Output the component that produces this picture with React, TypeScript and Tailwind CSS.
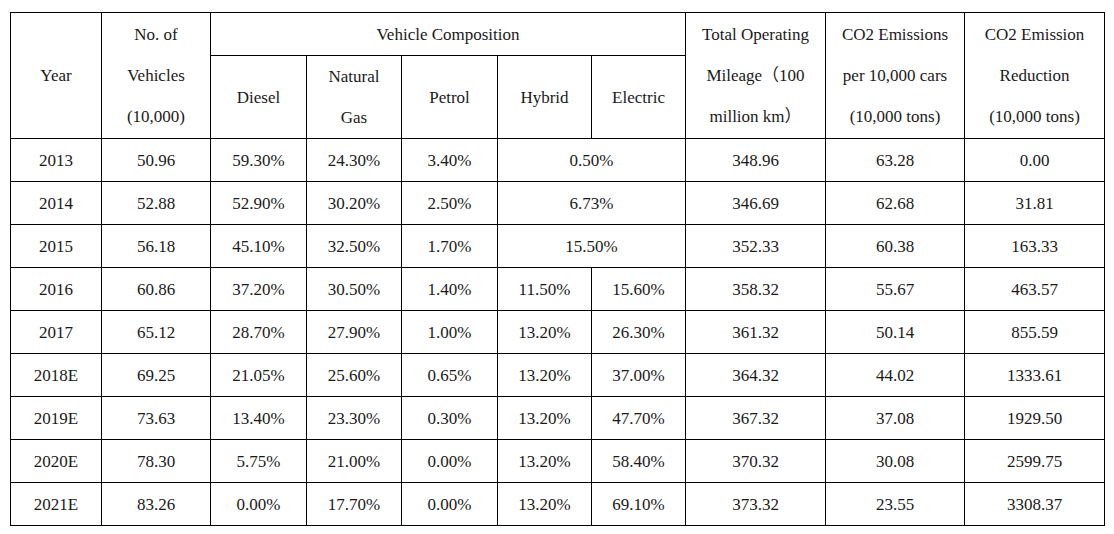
import React from 'react';

type Row = {
  year: string;
  vehicles: string;
  diesel: string;
  gas: string;
  petrol: string;
  hybrid?: string;
  electric?: string;
  combined?: string;
  mileage: string;
  perCar: string;
  reduction: string;
};

const rows: Row[] = [
  { year: '2013', vehicles: '50.96', diesel: '59.30%', gas: '24.30%', petrol: '3.40%', combined: '0.50%', mileage: '348.96', perCar: '63.28', reduction: '0.00' },
  { year: '2014', vehicles: '52.88', diesel: '52.90%', gas: '30.20%', petrol: '2.50%', combined: '6.73%', mileage: '346.69', perCar: '62.68', reduction: '31.81' },
  { year: '2015', vehicles: '56.18', diesel: '45.10%', gas: '32.50%', petrol: '1.70%', combined: '15.50%', mileage: '352.33', perCar: '60.38', reduction: '163.33' },
  { year: '2016', vehicles: '60.86', diesel: '37.20%', gas: '30.50%', petrol: '1.40%', hybrid: '11.50%', electric: '15.60%', mileage: '358.32', perCar: '55.67', reduction: '463.57' },
  { year: '2017', vehicles: '65.12', diesel: '28.70%', gas: '27.90%', petrol: '1.00%', hybrid: '13.20%', electric: '26.30%', mileage: '361.32', perCar: '50.14', reduction: '855.59' },
  { year: '2018E', vehicles: '69.25', diesel: '21.05%', gas: '25.60%', petrol: '0.65%', hybrid: '13.20%', electric: '37.00%', mileage: '364.32', perCar: '44.02', reduction: '1333.61' },
  { year: '2019E', vehicles: '73.63', diesel: '13.40%', gas: '23.30%', petrol: '0.30%', hybrid: '13.20%', electric: '47.70%', mileage: '367.32', perCar: '37.08', reduction: '1929.50' },
  { year: '2020E', vehicles: '78.30', diesel: '5.75%', gas: '21.00%', petrol: '0.00%', hybrid: '13.20%', electric: '58.40%', mileage: '370.32', perCar: '30.08', reduction: '2599.75' },
  { year: '2021E', vehicles: '83.26', diesel: '0.00%', gas: '17.70%', petrol: '0.00%', hybrid: '13.20%', electric: '69.10%', mileage: '373.32', perCar: '23.55', reduction: '3308.37' },
];

const cell = 'border border-black text-center align-middle p-0 font-normal';

export default function App() {
  return (
    <div className="bg-white w-[1114px] h-[534px] pt-[12px] pl-[10px] text-[17px] leading-[41px] text-[#1a1a1a] font-['Liberation_Serif','Noto_Sans_CJK_SC',serif]">
      <table className="table-fixed border-collapse w-[1094px]">
        <colgroup>
          <col className="w-[91px]" />
          <col className="w-[109px]" />
          <col className="w-[96px]" />
          <col className="w-[95px]" />
          <col className="w-[96px]" />
          <col className="w-[94px]" />
          <col className="w-[94px]" />
          <col className="w-[140px]" />
          <col className="w-[139px]" />
          <col className="w-[140px]" />
        </colgroup>
        <thead>
          <tr className="h-[43px]">
            <th rowSpan={2} className={cell}>Year</th>
            <th rowSpan={2} className={cell}>No. of<br />Vehicles<br />(10,000)</th>
            <th colSpan={5} className={cell}>Vehicle Composition</th>
            <th rowSpan={2} className={cell}>Total Operating<br />Mileage（100<br />million km）</th>
            <th rowSpan={2} className={cell}>CO2 Emissions<br />per 10,000 cars<br />(10,000 tons)</th>
            <th rowSpan={2} className={cell}>CO2 Emission<br />Reduction<br />(10,000 tons)</th>
          </tr>
          <tr className="h-[82px]">
            <th className={cell}>Diesel</th>
            <th className={cell}>Natural<br />Gas</th>
            <th className={cell}>Petrol</th>
            <th className={cell}>Hybrid</th>
            <th className={cell}>Electric</th>
          </tr>
        </thead>
        <tbody>
          {rows.map((r) => (
            <tr key={r.year} className="h-[43px]">
              <td className={cell}>{r.year}</td>
              <td className={cell}>{r.vehicles}</td>
              <td className={cell}>{r.diesel}</td>
              <td className={cell}>{r.gas}</td>
              <td className={cell}>{r.petrol}</td>
              {r.combined ? (
                <td colSpan={2} className={cell}>{r.combined}</td>
              ) : (
                <>
                  <td className={cell}>{r.hybrid}</td>
                  <td className={cell}>{r.electric}</td>
                </>
              )}
              <td className={cell}>{r.mileage}</td>
              <td className={cell}>{r.perCar}</td>
              <td className={cell}>{r.reduction}</td>
            </tr>
          ))}
        </tbody>
      </table>
    </div>
  );
}
